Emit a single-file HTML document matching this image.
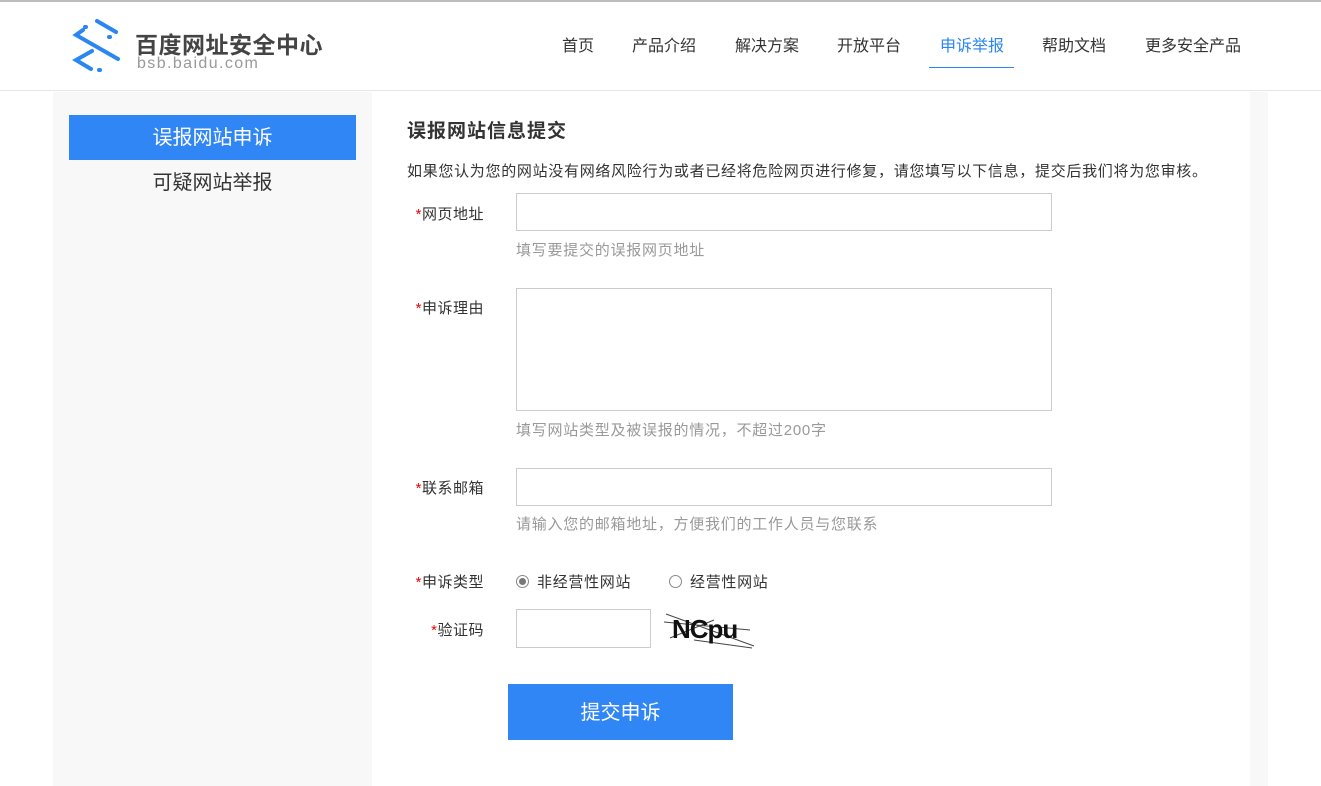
<!DOCTYPE html>
<html><head><meta charset="utf-8"><style>
*{margin:0;padding:0;box-sizing:border-box}
body{width:1321px;height:786px;overflow:hidden;background:#fff;font-family:"Liberation Sans","Noto Sans CJK SC",sans-serif;color:#333;position:relative}
.top{position:absolute;left:0;top:0;width:1321px;height:2px;background:#bdbdbd}
.hdr{position:absolute;left:0;top:2px;width:1321px;height:89px;border-bottom:1px solid #e6e6e6;background:#fff}
.nav a{position:absolute;top:30px;font-size:16px;color:#333;text-decoration:none;white-space:nowrap}
.wrap{position:absolute;left:53px;top:92px;width:1215px;height:694px;background:#f8f8f8}
.main{position:absolute;left:372px;top:92px;width:878px;height:694px;background:#fff}
.abs{position:absolute;white-space:nowrap}
.sp{letter-spacing:0.7px}
.lbl{position:absolute;font-size:15px;color:#333;text-align:right;width:96px;left:388px;letter-spacing:0.5px}
.lbl b{color:#e00;font-weight:normal}
.inp{position:absolute;border:1px solid #ccc;background:#fff}
.hint{position:absolute;left:516px;font-size:15px;color:#999;white-space:nowrap;letter-spacing:0.75px}
</style></head><body>
<div class="top"></div>
<div class="hdr">
<svg style="position:absolute;left:68px;top:14px" width="60" height="65" viewBox="68 15 60 65">
<g stroke="#2a86f0" stroke-width="4" stroke-linecap="round" fill="none">
<line x1="97" y1="20" x2="116" y2="31"/>
<polyline points="83,29 76,34 118,58"/>
<polyline points="92,50 76,59 91,68"/>
<line x1="85" y1="26" x2="86" y2="26"/>
<line x1="109" y1="36" x2="110" y2="36"/>
<line x1="99" y1="69" x2="100" y2="69"/>
</g></svg>
<div class="abs" style="left:135px;top:24px;font-size:23px;font-weight:bold;color:#444;letter-spacing:0.5px">百度网址安全中心</div>
<div class="abs" style="left:137px;top:53px;font-size:16px;color:#999;letter-spacing:1.4px">bsb.baidu.com</div>
<div class="nav">
<a style="left:562px">首页</a><a style="left:632px">产品介绍</a><a style="left:735px">解决方案</a><a style="left:837px">开放平台</a>
<a style="left:940px;color:#2a86f0">申诉举报</a><a style="left:1042px">帮助文档</a><a style="left:1145px">更多安全产品</a>
<div style="position:absolute;left:929px;top:65px;width:85px;height:1px;background:#2a86f0"></div>
</div>
</div>
<div class="wrap"></div>
<div class="main"></div>
<div class="abs" style="left:69px;top:115px;width:287px;height:45px;background:#3186f5;color:#fff;font-size:20px;text-align:center;line-height:47px">误报网站申诉</div>
<div class="abs" style="left:69px;top:160px;width:287px;height:45px;color:#333;font-size:20px;text-align:center;line-height:47px">可疑网站举报</div>
<div class="abs" style="left:407px;top:116px;font-size:19px;font-weight:bold;color:#333;letter-spacing:1px">误报网站信息提交</div>
<div class="abs sp" style="left:407px;top:160px;font-size:15px;color:#333">如果您认为您的网站没有网络风险行为或者已经将危险网页进行修复，请您填写以下信息，提交后我们将为您审核。</div>
<div class="lbl" style="top:203px"><b>*</b>网页地址</div>
<div class="inp" style="left:516px;top:193px;width:536px;height:38px"></div>
<div class="hint" style="top:239px">填写要提交的误报网页地址</div>
<div class="lbl" style="top:297px"><b>*</b>申诉理由</div>
<div class="inp" style="left:516px;top:288px;width:536px;height:123px"></div>
<div class="hint" style="top:419px">填写网站类型及被误报的情况，不超过200字</div>
<div class="lbl" style="top:477px"><b>*</b>联系邮箱</div>
<div class="inp" style="left:516px;top:468px;width:536px;height:38px"></div>
<div class="hint" style="top:513px">请输入您的邮箱地址，方便我们的工作人员与您联系</div>
<div class="lbl" style="top:571px"><b>*</b>申诉类型</div>
<div class="abs" style="left:516px;top:575px;width:13px;height:13px;border:1px solid #888;border-radius:50%"><div style="margin:2px;width:7px;height:7px;border-radius:50%;background:#777"></div></div>
<div class="abs sp" style="left:537px;top:571px;font-size:15px">非经营性网站</div>
<div class="abs" style="left:669px;top:575px;width:13px;height:13px;border:1px solid #888;border-radius:50%"></div>
<div class="abs sp" style="left:690px;top:571px;font-size:15px">经营性网站</div>
<div class="lbl" style="top:619px"><b>*</b>验证码</div>
<div class="inp" style="left:516px;top:609px;width:135px;height:39px"></div>
<svg class="abs" style="left:664px;top:610px" width="92" height="40">
<g stroke="#444" stroke-width="1"><line x1="2" y1="4" x2="90" y2="36"/><line x1="6" y1="28" x2="50" y2="10"/><line x1="30" y1="30" x2="88" y2="38"/><line x1="0" y1="12" x2="86" y2="20"/></g>
<text x="8" y="28" font-family="Liberation Sans" font-weight="bold" font-size="26" fill="#111" letter-spacing="-1">NCpu</text></svg>
<div class="abs" style="left:508px;top:684px;width:225px;height:56px;background:#3186f5;color:#fff;font-size:20px;text-align:center;line-height:58px">提交申诉</div>
</body></html>
